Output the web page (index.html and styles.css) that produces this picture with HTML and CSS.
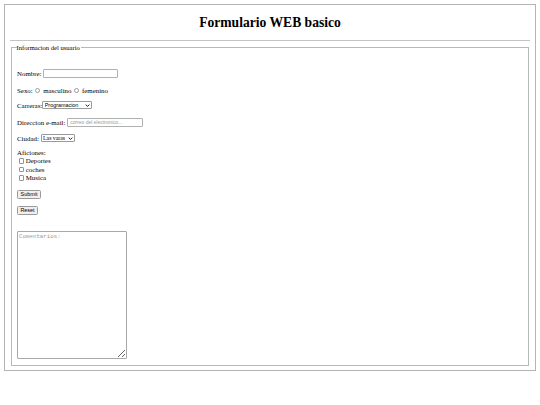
FILE: index.html
```html
<!DOCTYPE html>
<html lang="es">
<head>
<meta charset="utf-8">
<title>Formulario WEB basico</title>
<link rel="stylesheet" href="styles.css">
</head>
<body>
<div class="page">
  <h1 class="title">Formulario WEB basico</h1>
  <hr class="rule">
  <form class="form">
    <fieldset class="box">
      <legend class="legend">Informacion del usuario</legend>
      <div class="content">
        <div class="row r-nombre"><label>Nombre:</label>&nbsp;<input type="text" class="text-in"></div>
        <div class="row r-sexo">Sexo:&nbsp;<input type="radio" name="sexo" class="radio"> masculino <input type="radio" name="sexo" class="radio"> femenino</div>
        <div class="row r-carrera">Carreras:<span class="sel-wrap sel-prog"><select class="sel"><option>Programacion</option><option>Diseño</option></select><svg class="chev" viewBox="0 0 8 5" width="5" height="3"><path d="M1 1 L4 4 L7 1" fill="none" stroke="#111" stroke-width="1.6"/></svg></span></div>
        <div class="row r-mail">Direccion e-mail:&nbsp;<input type="email" class="text-in" placeholder="correo del electronico..."></div>
        <div class="row r-ciudad">Ciudad:&nbsp;<span class="sel-wrap sel-city"><select class="sel"><option>Las varas</option></select><svg class="chev" viewBox="0 0 8 5" width="5" height="3"><path d="M1 1 L4 4 L7 1" fill="none" stroke="#111" stroke-width="1.6"/></svg></span></div>
        <div class="hobbies">
          <div class="line">Aficiones:</div>
          <label class="line"><input type="checkbox" class="check">&nbsp;Deportes</label>
          <label class="line"><input type="checkbox" class="check">&nbsp;coches</label>
          <label class="line"><input type="checkbox" class="check">&nbsp;Musica</label>
        </div>
        <div class="btn-row r-submit"><input type="submit" value="Submit" class="btn"></div>
        <div class="btn-row r-reset"><input type="reset" value="Reset" class="btn"></div>
        <textarea class="comments" placeholder="Comentarios:"></textarea>
      </div>
    </fieldset>
  </form>
</div>
</body>
</html>
```

FILE: styles.css
```css
html, body {
  margin: 0;
  padding: 0;
}
body {
  padding: 4px;
  font-family: "Liberation Serif", "Times New Roman", serif;
  font-size: 6.9px;
  color: #000;
  background: #fff;
}
.page {
  border: 1px solid #b4b4b4;
  padding: 0 5px 4px 5px;
}
.title {
  text-align: center;
  font-size: 13.6px;
  line-height: 17px;
  font-weight: bold;
  margin: 9px 0 9px 0;
}
.rule {
  border: 0;
  border-top: 1px solid #c4c4c4;
  height: 0;
  margin: 0;
}
.form {
  margin: 0;
  padding-top: 1.5px;
}
.box {
  margin: 0 1px;
  padding: 0 5px 6px 5px;
  border: 1px solid #b8b8b8;
  min-width: 0;
}
.legend {
  padding: 0 1px 0 0;
  margin-left: -0.5px;
  font-size: 6.6px;
  line-height: 9px;
}
.content {
  display: flex;
  flex-direction: column;
  align-items: flex-start;
}
.row {
  display: flex;
  align-items: center;
  height: 10px;
  white-space: pre;
}
.r-nombre { margin-top: 16.5px; }
.r-sexo { margin-top: 7px; }
.r-carrera { margin-top: 5px; }
.r-mail { margin-top: 7px; }
.r-ciudad { margin-top: 6px; }
.hobbies {
  margin-top: 5px;
  display: flex;
  flex-direction: column;
}
.line {
  display: flex;
  align-items: center;
  height: 8.5px;
}
.r-submit { margin-top: 8px; }
.r-reset { margin-top: 7px; }
.btn-row {
  display: flex;
}
.text-in {
  box-sizing: border-box;
  width: 75px;
  height: 9px;
  margin: 0;
  padding: 0 2px;
  border: 1px solid #b0b0b0;
  border-radius: 1px;
  font-family: "Liberation Sans", Arial, sans-serif;
  font-size: 5px;
  outline: none;
}
.r-mail .text-in {
  width: 76px;
}
.text-in::placeholder {
  color: #9a9a9a;
}
.radio {
  appearance: none;
  box-sizing: border-box;
  width: 5px;
  height: 5px;
  margin: 0 1px 0 1px;
  border: 0.8px solid #9c9c9c;
  border-radius: 50%;
  background: #fff;
}
.check {
  appearance: none;
  box-sizing: border-box;
  width: 5.5px;
  height: 5.5px;
  margin: 0 0 0 1.5px;
  border: 0.8px solid #949494;
  border-radius: 1px;
  background: #fff;
}
.sel-wrap {
  position: relative;
  display: inline-flex;
}
.sel {
  appearance: none;
  box-sizing: border-box;
  height: 8px;
  margin: 0;
  padding: 0 6px 0 1.5px;
  border: 1px solid #9a9a9a;
  border-radius: 1px;
  background: #fff;
  font-family: "Liberation Sans", Arial, sans-serif;
  font-size: 5.4px;
  line-height: 6px;
  color: #000;
}
.sel-prog .sel { width: 50px; }
.sel-city .sel {
  width: 34px;
  font-family: "Liberation Serif", "Times New Roman", serif;
  font-size: 5.8px;
}
.chev {
  position: absolute;
  right: 2px;
  top: 2.5px;
}
.btn {
  box-sizing: border-box;
  height: 9px;
  margin: 0;
  padding: 0 2px;
  border: 1px solid #9a9a9a;
  border-radius: 1.5px;
  background: #efefef;
  font-family: "Liberation Sans", Arial, sans-serif;
  font-size: 5.4px;
  line-height: 7px;
  color: #000;
}
.r-submit .btn { width: 24px; }
.r-reset .btn { width: 21px; }
.comments {
  box-sizing: border-box;
  width: 110px;
  height: 128px;
  margin: 16px 0 0 0;
  padding: 1px;
  border: 1px solid #a8a8a8;
  border-radius: 1px;
  font-family: "Liberation Mono", "Courier New", monospace;
  font-size: 5.8px;
  line-height: 7px;
  resize: both;
  outline: none;
}
.comments::placeholder {
  color: #9a9a9a;
}
```
